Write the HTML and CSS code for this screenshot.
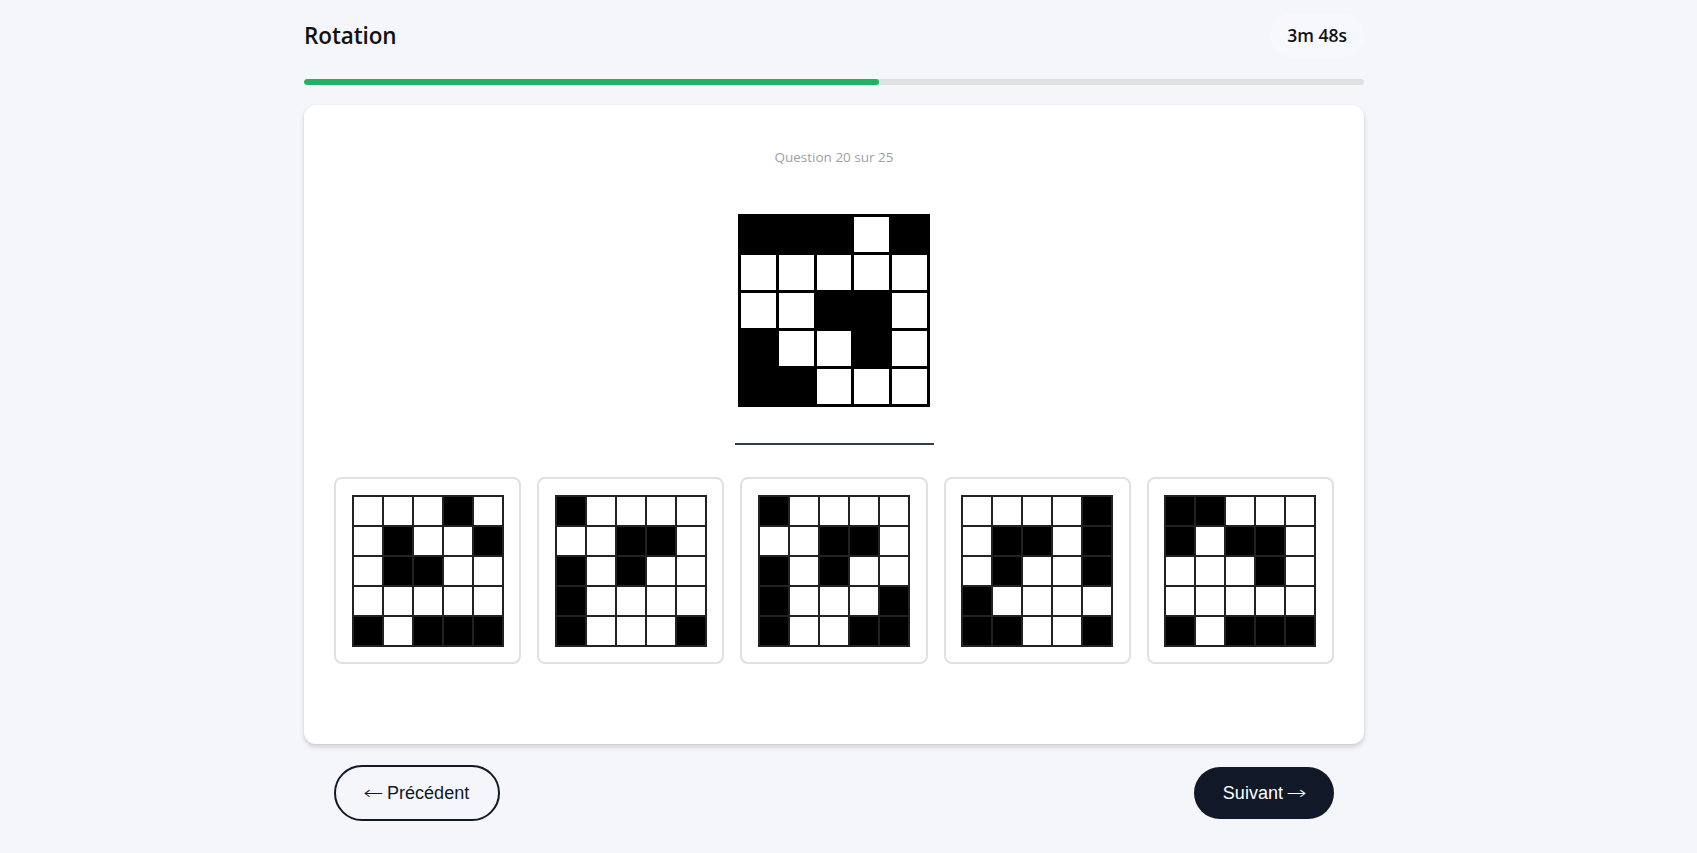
FILE: index.html
```html
<!DOCTYPE html>
<html lang="fr">
<head>
<meta charset="utf-8">
<title>Rotation</title>
<link rel="stylesheet" href="styles.css">
</head>
<body>
<div class="page">
  <header class="top">
    <h1 class="title">Rotation</h1>
    <div class="timer">3m 48s</div>
  </header>
  <div class="progress"><div class="progress-fill" style="width:54.2%"></div></div>

  <main class="card">
    <p class="qnum">Question 20 sur 25</p>
    <div class="grid main-grid">
      <div class="b"></div><div class="b"></div><div class="b"></div><div></div><div class="b"></div>
      <div></div><div></div><div></div><div></div><div></div>
      <div></div><div></div><div class="b"></div><div class="b"></div><div></div>
      <div class="b"></div><div></div><div></div><div class="b"></div><div></div>
      <div class="b"></div><div class="b"></div><div></div><div></div><div></div>
    </div>
    <div class="divider"></div>

    <div class="options">
      <div class="option">
        <div class="grid opt-grid">
          <div></div><div></div><div></div><div class="b"></div><div></div>
          <div></div><div class="b"></div><div></div><div></div><div class="b"></div>
          <div></div><div class="b"></div><div class="b"></div><div></div><div></div>
          <div></div><div></div><div></div><div></div><div></div>
          <div class="b"></div><div></div><div class="b"></div><div class="b"></div><div class="b"></div>
        </div>
      </div>
      <div class="option">
        <div class="grid opt-grid">
          <div class="b"></div><div></div><div></div><div></div><div></div>
          <div></div><div></div><div class="b"></div><div class="b"></div><div></div>
          <div class="b"></div><div></div><div class="b"></div><div></div><div></div>
          <div class="b"></div><div></div><div></div><div></div><div></div>
          <div class="b"></div><div></div><div></div><div></div><div class="b"></div>
        </div>
      </div>
      <div class="option">
        <div class="grid opt-grid">
          <div class="b"></div><div></div><div></div><div></div><div></div>
          <div></div><div></div><div class="b"></div><div class="b"></div><div></div>
          <div class="b"></div><div></div><div class="b"></div><div></div><div></div>
          <div class="b"></div><div></div><div></div><div></div><div class="b"></div>
          <div class="b"></div><div></div><div></div><div class="b"></div><div class="b"></div>
        </div>
      </div>
      <div class="option">
        <div class="grid opt-grid">
          <div></div><div></div><div></div><div></div><div class="b"></div>
          <div></div><div class="b"></div><div class="b"></div><div></div><div class="b"></div>
          <div></div><div class="b"></div><div></div><div></div><div class="b"></div>
          <div class="b"></div><div></div><div></div><div></div><div></div>
          <div class="b"></div><div class="b"></div><div></div><div></div><div class="b"></div>
        </div>
      </div>
      <div class="option">
        <div class="grid opt-grid">
          <div class="b"></div><div class="b"></div><div></div><div></div><div></div>
          <div class="b"></div><div></div><div class="b"></div><div class="b"></div><div></div>
          <div></div><div></div><div></div><div class="b"></div><div></div>
          <div></div><div></div><div></div><div></div><div></div>
          <div class="b"></div><div></div><div class="b"></div><div class="b"></div><div class="b"></div>
        </div>
      </div>
    </div>
  </main>

  <nav class="nav">
    <button class="btn btn-prev"><span class="arrow">←</span> Précédent</button>
    <button class="btn btn-next">Suivant <span class="arrow">→</span></button>
  </nav>
</div>
</body>
</html>
```

FILE: styles.css
```css
* { box-sizing: border-box; }

body {
  margin: 0;
  background: #f5f6fa;
  font-family: "Open Sans", "Noto Sans", sans-serif;
  color: #111;
}

.page {
  width: 1060px;
  margin-left: 304px;
  padding-top: 13px;
}

.top {
  display: flex;
  justify-content: space-between;
  align-items: center;
  height: 44px;
}

.title {
  margin: 0;
  font-size: 22.5px;
  font-weight: 600;
  letter-spacing: -0.1px;
  color: #111;
}

.timer {
  height: 44px;
  display: flex;
  align-items: center;
  padding: 0 17px;
  border-radius: 22px;
  background: #f7f8fb;
  font-size: 17.5px;
  font-weight: 600;
  color: #111;
}

.progress {
  margin-top: 22px;
  height: 6px;
  border-radius: 3px;
  background: #dfe0e1;
  overflow: hidden;
}

.progress-fill {
  height: 100%;
  border-radius: 3px;
  background: #1db264;
}

.card {
  margin-top: 20px;
  background: #fff;
  border-radius: 12px;
  box-shadow: 0 3px 5px rgba(0, 0, 0, 0.16), 0 0 2px rgba(0, 0, 0, 0.06);
  padding: 42px 30px 80px;
  display: flex;
  flex-direction: column;
  align-items: center;
}

.qnum {
  margin: 0;
  font-size: 13.5px;
  line-height: 20px;
  color: #9b9fa6;
}

.grid {
  display: grid;
  grid-template-columns: repeat(5, 1fr);
  grid-template-rows: repeat(5, 1fr);
  background: #000;
}

.grid > div { background: #fff; }
.grid > div.b { background: #000; }

.main-grid {
  margin-top: 47px;
  width: 192px;
  height: 193px;
  padding: 3px;
  gap: 3px;
}

.divider {
  margin-top: 36px;
  width: 199px;
  height: 2px;
  background: #2c3e50;
}

.options {
  margin-top: 32px;
  width: 100%;
  display: grid;
  grid-template-columns: repeat(5, 1fr);
  gap: 16px;
}

.option {
  height: 187px;
  border: 2px solid #e0e0e0;
  border-radius: 8px;
  background: #fff;
  display: flex;
  align-items: center;
  justify-content: center;
}

.opt-grid {
  width: 152px;
  height: 152px;
  padding: 2px;
  gap: 2px;
  background: #222;
}

.nav {
  margin-top: 21px;
  padding: 0 30px;
  display: flex;
  justify-content: space-between;
  align-items: center;
}

.btn {
  font-family: "Liberation Sans", Arial, sans-serif;
  font-size: 18px;
  line-height: 21px;
  border-radius: 28px;
  cursor: pointer;
  white-space: nowrap;
}

.arrow {
  display: inline-block;
  font-family: "DejaVu Sans", sans-serif;
  font-weight: 200;
  font-size: 18px;
  transform: scaleX(1.35);
  margin: 0 1px;
}

.btn-prev {
  padding: 15px 29px;
  border: 2px solid #111827;
  background: transparent;
  color: #111827;
}

.btn-next {
  padding: 15px 29px;
  border: none;
  background: #111827;
  color: #fff;
}
```
